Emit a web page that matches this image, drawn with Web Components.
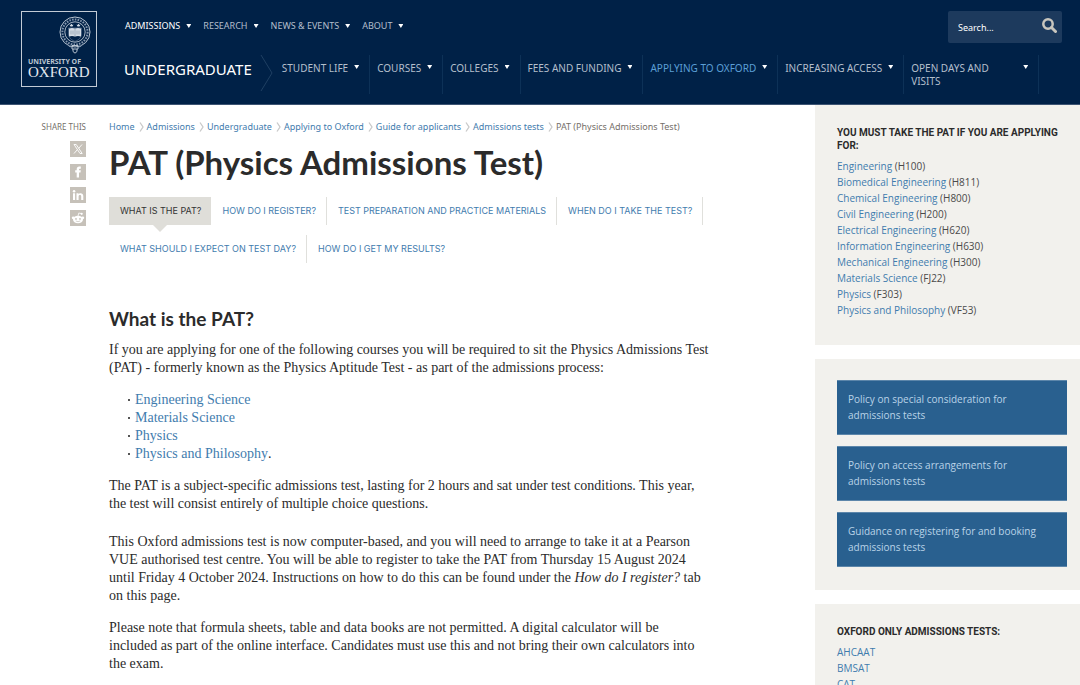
<!DOCTYPE html>
<html lang="en">
<head>
<meta charset="utf-8">
<meta name="viewport" content="width=device-width, initial-scale=1">
<title>PAT (Physics Admissions Test) | University of Oxford</title>
<style>
  body { margin: 0; background: #fff; color: #333; font-family: "Noto Sans", sans-serif; }
</style>
</head>
<body>
<oxford-page></oxford-page>

<script>
const link = 'a { color: #3f7cae; text-decoration: none; } a:hover { text-decoration: underline; }';

function define(name, css, html) {
  customElements.define(name, class extends HTMLElement {
    connectedCallback() {
      if (this.shadowRoot) return;
      const template = document.createElement('template');
      template.innerHTML = `<style>* { box-sizing: border-box; } ${link} ${css}</style>` +
        (typeof html === 'function' ? html(this) : html);
      this.attachShadow({ mode: 'open' }).append(template.content.cloneNode(true));
    }
  });
}

/* University crest: belt ring, shield with open book, hanging buckle */
define('ox-logo', `
  :host { display: block; flex: none; }
  a { display: flex; flex-direction: column; width: 76px; height: 76px; border: 1px solid #c3cbd5; color: #e3e8ee; padding: 3px 5px 0 6px; }
  a:hover { text-decoration: none; }
  svg { align-self: flex-end; display: block; }
  .small { font: 700 7px/8px "Noto Sans", sans-serif; margin-top: 3px; white-space: nowrap; color: #bcc6d2; }
  .big { font: 15px/12px "Liberation Serif", serif; white-space: nowrap; }
`, `<a href="#" aria-label="University of Oxford">
  <svg width="32" height="40" viewBox="0 0 32 40" fill="none" stroke="#b9c4d1">
    <circle cx="16" cy="17" r="15"/>
    <circle cx="16" cy="17" r="12.6" stroke-width="2" stroke-dasharray="1.6 1.2" stroke="#8496ad"/>
    <circle cx="16" cy="17" r="10.2" stroke-width=".9"/>
    <path d="M9.500 13h13v6c0 3.500-3 6-6.500 7.500-3.500-1.500-6.500-4-6.500-7.500z" stroke-width=".6" stroke="#71859f"/>
    <path d="M10 13.500q3-1.200 6 0 3-1.200 6 0v8q-3-1-6 0-3-1-6 0z" fill="#d6dde5" stroke="none"/>
    <path d="M16 13.500v8M12 15.500v4M14 15.500v4M18 15.500v4M20 15.500v4" stroke="#8192a8" stroke-width=".7"/>
    <path d="M10.500 9.500l1 2h2l1-2-1 .6-1-1.400-1 1.400zM17.500 9.500l1 2h2l1-2-1 .6-1-1.400-1 1.400z" fill="#d6dde5" stroke="none"/>
    <path d="M13 30.500h6v3.500h-6zM14 34v2.500l2 1.700 2-1.700V34"/>
    <path d="M8 28.500q2 4 4.500 3.500M24 28.500q-2 4-4.500 3.500" stroke="#8496ad"/>
  </svg>
  <span class="small">UNIVERSITY OF</span><span class="big">OXFORD</span>
</a>`);

define('ox-caret', `
  :host { display: block; flex: none; width: 5px; height: 4px; background: #fff; clip-path: polygon(0 0, 100% 0, 50% 100%); }
`, '');

define('ox-top-item', `
  :host { display: flex; align-items: center; gap: 6px; font-size: 9px; line-height: 12px; }
  a { color: #b4bfcc; }
  :host([current]) a { color: #fff; }
`, '<a href="#"><slot></slot></a><ox-caret></ox-caret>');

define('ox-nav-item', `
  :host { display: flex; align-items: flex-start; gap: 6px; min-height: 39px; padding: 7px 10px 0 7px; border-right: 1px solid #0d3157; font-size: 10px; line-height: 13px; }
  a { color: #b4bfcc; white-space: nowrap; }
  :host([current]) a { color: #5b9fd6; }
  :host([wide]) { flex: 0 1 135px; justify-content: space-between; }
  :host([wide]) a { white-space: normal; max-width: 90px; }
  ox-caret { margin-top: 3px; }
`, '<a href="#"><slot></slot></a><ox-caret></ox-caret>');

define('ox-search', `
  :host { display: block; flex: none; }
  form { display: flex; width: 114px; height: 32px; background: #1d3a5d; border-radius: 2px; }
  input { flex: 1; min-width: 0; border: 0; background: none; padding: 0 0 0 10px; color: #fff; font: 9px "Noto Sans", sans-serif; outline: 0; }
  input::placeholder { color: #fff; opacity: 1; }
  button { border: 0; background: none; padding: 0 5px 4px; display: flex; align-items: center; }
`, `<form role="search"><input type="search" aria-label="Search" placeholder="Search...">
  <button type="button" aria-label="Submit search"><svg width="15" height="15" viewBox="0 0 15 15" fill="none" stroke="#c9c6be"><circle cx="6" cy="6" r="4.700" stroke-width="2.500"/><path d="M9.500 9.500l4 4" stroke-width="3" stroke-linecap="round"/></svg></button></form>`);

define('ox-header', `
  :host { display: block; background: #002147; border-bottom: 1px solid #3d5473; }
  header { display: flex; gap: 27px; min-height: 104px; padding: 11px 18px 0 21px; }
  .rows { flex: 1; min-width: 0; }
  .top { display: flex; justify-content: space-between; height: 44px; }
  .top nav { display: flex; gap: 12px; height: 30px; padding-left: 1px; align-items: center; }
  .bottom { display: flex; }
  .section { font-size: 15px; line-height: 28px; color: #fff; }
  .chevron { flex: none; margin: 0 2px 0 8px; }
  .bottom nav { display: flex; flex: 1; min-width: 0; }
`, `<header><ox-logo></ox-logo><div class="rows">
  <div class="top"><nav aria-label="Site">
    <ox-top-item current>ADMISSIONS</ox-top-item><ox-top-item>RESEARCH</ox-top-item><ox-top-item>NEWS &amp; EVENTS</ox-top-item><ox-top-item>ABOUT</ox-top-item>
  </nav><ox-search></ox-search></div>
  <div class="bottom"><a class="section" href="#">UNDERGRADUATE</a>
  <svg class="chevron" width="13" height="36" viewBox="0 0 13 36" fill="none" stroke="#1f4063"><path d="M1 0l11 18L1 36"/></svg>
  <nav aria-label="Undergraduate">
    <ox-nav-item>STUDENT LIFE</ox-nav-item><ox-nav-item>COURSES</ox-nav-item><ox-nav-item>COLLEGES</ox-nav-item><ox-nav-item>FEES AND FUNDING</ox-nav-item><ox-nav-item current>APPLYING TO OXFORD</ox-nav-item><ox-nav-item>INCREASING ACCESS</ox-nav-item><ox-nav-item wide>OPEN DAYS AND VISITS</ox-nav-item>
  </nav></div>
</div></header>`);

define('ox-share', `
  :host { display: flex; flex-direction: column; align-items: flex-end; padding-top: 16px; font-size: 8px; line-height: 12px; color: #75706a; }
  nav { display: flex; flex-direction: column; gap: 7px; margin-top: 8px; }
  a, svg { display: block; }
`, `<span>SHARE THIS</span><nav aria-label="Share this page">
  <a href="#" aria-label="X"><svg width="16" height="16" viewBox="0 0 16 16"><path fill="#c6c1b9" d="M0 0h16v16H0z"/><path d="M4 3.500h2.200l6 9H10zM12 3.500L8.700 7.300M7.300 8.700L4 12.500" fill="none" stroke="#fff" stroke-width=".9"/></svg></a>
  <a href="#" aria-label="Facebook"><svg width="16" height="16" viewBox="0 0 16 16"><path fill="#c6c1b9" d="M0 0h16v16H0z"/><path d="M6.700 13.500V8.600H5.200V6.300h1.500V5.200c0-1.800 1-2.700 2.500-2.700h1.600v2.200h-1c-.6 0-.8.3-.8.900v.7h1.800l-.3 2.300H9v4.900z" fill="#fff"/></svg></a>
  <a href="#" aria-label="LinkedIn"><svg width="16" height="16" viewBox="0 0 16 16"><path fill="#c6c1b9" d="M0 0h16v16H0z"/><path d="M3 6.300h2.100V13H3zM6.500 6.300h2v.9c1-1.600 4.800-1.600 4.800 1.700V13h-2.100V9.400c0-2-2.600-1.800-2.600 0V13H6.500z" fill="#fff"/><circle cx="4.050" cy="4.200" r="1.250" fill="#fff"/></svg></a>
  <a href="#" aria-label="Reddit"><svg width="16" height="16" viewBox="0 0 16 16"><path fill="#c6c1b9" d="M0 0h16v16H0z"/><ellipse cx="8" cy="9.500" rx="5" ry="3.800" fill="#fff"/><circle cx="3.200" cy="7.800" r="1.400" fill="#fff"/><circle cx="12.800" cy="7.800" r="1.400" fill="#fff"/><path d="M8 6l.8-3 2.600.6" fill="none" stroke="#fff" stroke-width=".8"/><circle cx="11.700" cy="3.800" r="1.100" fill="#fff"/><circle cx="6" cy="8.900" r=".9" fill="#c6c1b9"/><circle cx="10" cy="8.900" r=".9" fill="#c6c1b9"/><path d="M5.800 11q2.200 1.400 4.400 0" fill="none" stroke="#c6c1b9" stroke-width=".7"/></svg></a>
</nav>`);

define('ox-crumb', `
  :host { display: flex; align-items: center; font-size: 9px; line-height: 12px; white-space: nowrap; }
  svg { margin: 0 3px 0 4px; }
`, '<a href="#"><slot></slot></a><svg width="5" height="10" viewBox="0 0 5 10" fill="none" stroke="#c9c9c9" stroke-width="1.300"><path d="M1 .5l3 4.500-3 4.500"/></svg>');

define('ox-tab', `
  :host { display: block; height: 28px; border-right: 1px solid #e0e0dc; }
  :host([last]) { border-right: 0; }
  a { position: relative; display: block; height: 28px; padding: 0 10px 0 11px; font: 9px/28px Inter, sans-serif; white-space: nowrap; }
  :host([current]) { border-right: 0; }
  :host([current]) a { background: #dfded9; color: #333; }
  :host([current]) a::after { content: ""; position: absolute; left: 50%; top: 100%; margin-left: -7px; border: 7px solid transparent; border-top-color: #dfded9; border-bottom: 0; }
`, '<a href="#"><slot></slot></a>');

define('ox-article', `
  :host { display: block; padding: 16px 15px 0 23px; min-width: 0; }
  .crumbs { display: flex; align-items: center; font-size: 9px; line-height: 12px; color: #75706a; }
  h1 { margin: 8px 0 14px; font: 700 33px/42px Lato, sans-serif; color: #2b2b2b; }
  .tabs { display: flex; flex-wrap: wrap; row-gap: 10px; }
  h2 { margin: 44px 0 10px; font: 700 19px/24px Lato, sans-serif; color: #2b2b2b; }
  .body { max-width: 600px; font: 14px/18px "Liberation Serif", serif; color: #2b2b2b; }
  p, ul { margin: 0 0 14px; }
  p.spaced { margin-bottom: 20px; }
  ul { list-style: none; padding: 0 0 0 19px; }
  li { display: flex; align-items: center; }
  li::before { content: ""; width: 2px; height: 2px; margin-right: 5px; background: #555; }
`, `<nav class="crumbs" aria-label="Breadcrumb"><ox-crumb>Home</ox-crumb><ox-crumb>Admissions</ox-crumb><ox-crumb>Undergraduate</ox-crumb><ox-crumb>Applying to Oxford</ox-crumb><ox-crumb>Guide for applicants</ox-crumb><ox-crumb>Admissions tests</ox-crumb><span>PAT (Physics Admissions Test)</span></nav>
<h1>PAT (Physics Admissions Test)</h1>
<nav class="tabs" aria-label="Sections"><ox-tab current>WHAT IS THE PAT?</ox-tab><ox-tab>HOW DO I REGISTER?</ox-tab><ox-tab>TEST PREPARATION AND PRACTICE MATERIALS</ox-tab><ox-tab>WHEN DO I TAKE THE TEST?</ox-tab><ox-tab>WHAT SHOULD I EXPECT ON TEST DAY?</ox-tab><ox-tab last>HOW DO I GET MY RESULTS?</ox-tab></nav>
<div class="body">
<h2>What is the PAT?</h2>
<p>If you are applying for one of the following courses you will be required to sit the Physics Admissions Test (PAT) - formerly known as the Physics Aptitude Test - as part of the admissions process:</p>
<ul><li><a href="#">Engineering Science</a></li><li><a href="#">Materials Science</a></li><li><a href="#">Physics</a></li><li><a href="#">Physics and Philosophy</a>.</li></ul>
<p class="spaced">The PAT is a subject-specific admissions test, lasting for 2 hours and sat under test conditions. This year, the test will consist entirely of multiple choice questions.</p>
<p>This Oxford admissions test is now computer-based, and you will need to arrange to take it at a Pearson VUE authorised test centre. You will be able to register to take the PAT from Thursday 15 August 2024 until Friday 4 October 2024. Instructions on how to do this can be found under the <em>How do I register?</em> tab on this page.</p>
<p>Please note that formula sheets, table and data books are not permitted. A digital calculator will be included as part of the online interface. Candidates must use this and not bring their own calculators into the exam.</p>
</div>`);

define('ox-panel', `
  :host { display: block; background: #f2f1ed; padding: 21px 13px 23px 22px; }
`, '<slot></slot>');

define('ox-test-list', `
  :host { display: block; padding-bottom: 4px; font: 10px/16px "Open Sans", sans-serif; color: #4a4a4a; }
  h2 { margin: 0 0 6px; font: 700 10px/13px Roboto, sans-serif; color: #2b2b2b; }
  ul { list-style: none; margin: 0; padding: 0; }
`, el => `<h2>${el.getAttribute('heading')}</h2><ul>${el.getAttribute('items').split('|').map(item => {
  const [name, code] = item.split(':');
  return `<li><a href="#">${name}</a>${code ? ` (${code})` : ''}</li>`;
}).join('')}</ul>`);

define('ox-policy-link', `
  :host { display: block; }
  a { display: block; min-height: 55px; padding: 10px 11px; background: #29608f; border: 1px solid #5c86aa; border-width: 1px 0; font: 10px/16px "Open Sans", sans-serif; color: #b9d3e8; }
  span { display: block; max-width: 190px; }
`, '<a href="#"><span><slot></slot></span></a>');

define('ox-sidebar', `
  :host { display: flex; flex-direction: column; gap: 14px; }
  .links { display: flex; flex-direction: column; gap: 11px; }
`, `<ox-panel><ox-test-list heading="YOU MUST TAKE THE PAT IF YOU ARE APPLYING FOR:" items="Engineering:H100|Biomedical Engineering:H811|Chemical Engineering:H800|Civil Engineering:H200|Electrical Engineering:H620|Information Engineering:H630|Mechanical Engineering:H300|Materials Science:FJ22|Physics:F303|Physics and Philosophy:VF53"></ox-test-list></ox-panel>
<ox-panel><div class="links"><ox-policy-link>Policy on special consideration for admissions tests</ox-policy-link><ox-policy-link>Policy on access arrangements for admissions tests</ox-policy-link><ox-policy-link>Guidance on registering for and booking admissions tests</ox-policy-link></div></ox-panel>
<ox-panel><ox-test-list heading="OXFORD ONLY ADMISSIONS TESTS:" items="AHCAAT|BMSAT|CAT"></ox-test-list></ox-panel>`);

define('oxford-page', `
  :host { display: flex; flex-direction: column; height: 100vh; overflow: hidden; }
  ox-header { flex: none; }
  main { display: grid; grid-template-columns: 86px minmax(0, 1fr) 265px; align-items: start; }
`, '<ox-header></ox-header><main><ox-share></ox-share><ox-article></ox-article><ox-sidebar></ox-sidebar></main>');
</script>
</body>
</html>
